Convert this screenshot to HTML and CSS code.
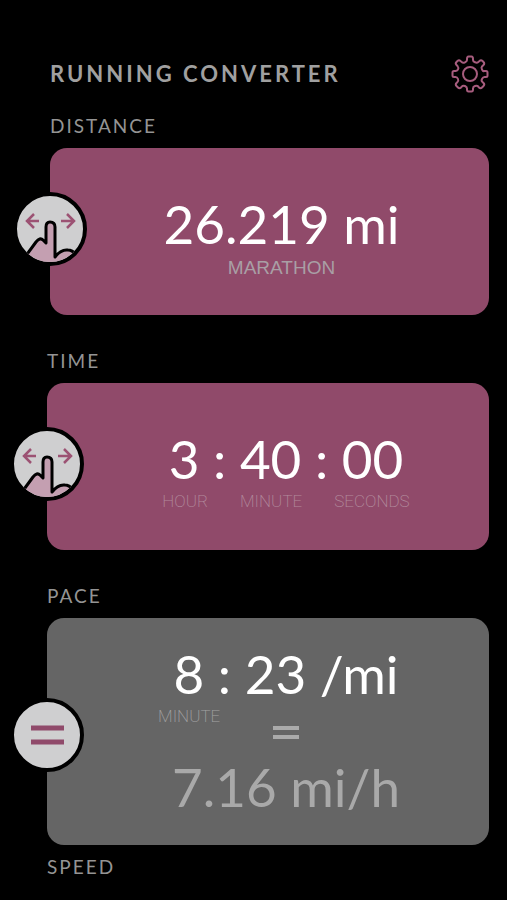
FILE: index.html
```html
<!DOCTYPE html>
<html lang="en">
<head>
<meta charset="utf-8">
<meta name="viewport" content="width=device-width, initial-scale=1">
<title>Running Converter</title>
<link rel="stylesheet" href="styles.css">
</head>
<body>
<svg class="defs" aria-hidden="true">
  <symbol id="swipe" viewBox="0 0 66 66">
    <g class="arrow">
      <path d="M10 25H22M17 18L10 25L17 32"/>
      <path d="M44 25H57M50 18L57 25L50 32"/>
    </g>
    <path class="hand" d="M8 61L19 46Q23 41 26 44L29 47V31Q29 26 33 26Q38 26 38 31V61Q44 53 51 54Q55 54 60 59L56 72H9Z"/>
  </symbol>
</svg>
<main class="app">
  <header class="header">
    <h1 class="title">RUNNING CONVERTER</h1>
    <button class="settings" type="button" aria-label="Settings">
      <svg viewBox="0 0 38 38" aria-hidden="true">
        <path d="M16 4Q16 1.500 17.500 1.500H20.500Q22 1.500 22 4V5Q22 6.500 24 7.300T27 7.200L28.500 6Q30 4.500 31.500 6L32.500 7Q34 8.500 32.500 10L31 11.500Q30 12.500 31 14.500T33 16H35Q36.500 16 36.500 17.500V20.500Q36.500 22 35 22H33.500Q32 22 31 24T31.500 27L32.500 28Q34 29.500 32.500 31L31 32.500Q29.500 34 28 32.500L27 31.300Q26 30.300 24 31T22 33.500V34.500Q22 36.500 20.500 36.500H17.500Q16 36.500 16 34.500V33.500Q16 31.800 14 31T11 31.300L10 32.500Q8.500 34 7 32.500L5.500 31Q4 29.500 5.500 28L6.500 27Q7.800 26 7 24T4.500 22H3Q1.500 22 1.500 20.500V17.500Q1.500 16 3 16H4.500Q6 16 7 14.500T6.500 11L5.500 10Q4 8.500 5.500 7L6.500 6Q8 4.500 9.500 6L11 7.200Q12 8.200 14 7.300T16 5Z"/>
        <circle cx="19" cy="19" r="7"/>
      </svg>
    </button>
  </header>

  <section class="group distance">
    <h2 class="label">DISTANCE</h2>
    <div class="card">
      <button class="badge" type="button" aria-label="Adjust distance"><svg viewBox="0 0 66 66"><use href="#swipe"/></svg></button>
      <div class="value">26.219 mi</div>
      <div class="race">MARATHON</div>
    </div>
  </section>

  <section class="group">
    <h2 class="label">TIME</h2>
    <div class="card">
      <button class="badge" type="button" aria-label="Adjust time"><svg viewBox="0 0 66 66"><use href="#swipe"/></svg></button>
      <div class="value">3 : 40 : 00</div>
      <div class="units"><span>HOUR</span><span>MINUTE</span><span>SECONDS</span></div>
    </div>
  </section>

  <section class="group pace">
    <h2 class="label">PACE</h2>
    <div class="card result">
      <button class="badge low" type="button" aria-label="Calculate"><svg viewBox="0 0 66 66"><path class="equals" d="M17 26H50M17 40H50"/></svg></button>
      <div class="value">8 : 23 /mi</div>
      <div class="units">MINUTE</div>
      <svg class="same" viewBox="0 0 26 14" aria-label="equals"><path d="M0 2H26M0 11H26"/></svg>
      <div class="value speed">7.16 mi/h</div>
    </div>
    <h2 class="label">SPEED</h2>
  </section>
</main>
</body>
</html>
```

FILE: styles.css
```css
* { box-sizing: border-box; }
body {
  margin: 0;
  background: #000;
  color: #a0a0a0;
  font-family: Lato, "Open Sans", sans-serif;
}
.defs { position: absolute; width: 0; height: 0; }
.app { padding: 54px 18px 16px 47px; }
.header {
  display: flex;
  align-items: center;
  justify-content: space-between;
  height: 40px;
  padding-left: 3px;
}
.title { margin: 0; font-size: 22px; font-weight: 700; line-height: 40px; letter-spacing: 3px; white-space: nowrap; }
.settings { width: 38px; height: 38px; padding: 0; border: 0; background: none; }
.settings svg { display: block; fill: none; stroke: #a65c7d; stroke-width: 2; }
.label {
  margin: 0;
  font-size: 19px;
  font-weight: 400;
  line-height: 44px;
  letter-spacing: 2px;
  color: #949494;
}
.group { padding-bottom: 24px; }
.distance { padding: 10px 0 24px 3px; }
.pace { padding-bottom: 0; }
.card {
  position: relative;
  display: flex;
  flex-direction: column;
  align-items: center;
  min-height: 167px;
  padding: 46px 0 30px 36px;
  border-radius: 17px;
  background: #904a6a;
}
.distance .card { padding-left: 24px; }
.result { min-height: 227px; padding-top: 26px; padding-bottom: 16px; background: #656565; }
.badge {
  position: absolute;
  top: 44px;
  left: -37px;
  width: 74px;
  height: 74px;
  padding: 0;
  overflow: hidden;
  border: 4px solid #000;
  border-radius: 50%;
  background: #cfcfd0;
}
.low { top: 80px; }
.badge svg { display: block; width: 66px; height: 66px; }
.arrow { fill: none; stroke: #9c5273; stroke-width: 2.5; }
.hand { fill: #c49fb1; stroke: #000; stroke-width: 3; stroke-linejoin: round; }
.equals { stroke: #904a6a; stroke-width: 5; }
.value { font-size: 53px; line-height: 60px; color: #fff; white-space: nowrap; }
.race { margin-top: 4px; font-family: "Liberation Sans", sans-serif; font-size: 19px; line-height: 20px; color: #a99fa5; }
.units {
  display: flex;
  gap: 32px;
  margin-top: 2px;
  font: 200 17px/20px Roboto, sans-serif;
  color: #b28a9d;
}
.result .units { align-self: flex-start; padding-left: 75px; color: #a2a2a2; }
.same { width: 26px; height: 14px; stroke: #aaa; stroke-width: 4; }
.speed { margin-top: 17px; color: #a9a9a9; }
```
